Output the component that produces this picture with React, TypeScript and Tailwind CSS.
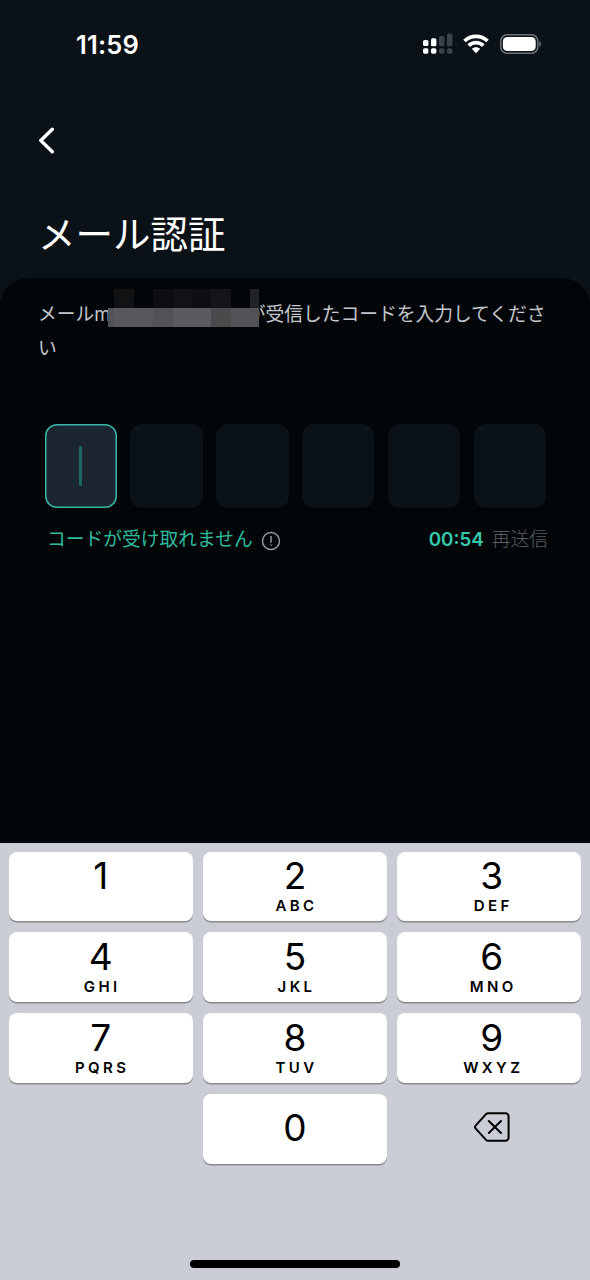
import clsx from 'clsx'

const keys = [
  { digit: '1', letters: '' },
  { digit: '2', letters: 'ABC' },
  { digit: '3', letters: 'DEF' },
  { digit: '4', letters: 'GHI' },
  { digit: '5', letters: 'JKL' },
  { digit: '6', letters: 'MNO' },
  { digit: '7', letters: 'PQRS' },
  { digit: '8', letters: 'TUV' },
  { digit: '9', letters: 'WXYZ' },
]

function StatusBar() {
  return (
    <div className="flex h-[88px] items-center justify-between pl-[76px] pr-[48px]">
      <span className="pt-px text-[25.5px] font-semibold leading-none tracking-[0.2px]">11:59</span>
      <div className="flex items-center">
        <svg width="32" height="22" viewBox="0 0 32 22" className="mr-[9px]">
          <g fill="#fff">
            <rect x="1" y="7" width="5.4" height="6" rx="1.6" />
            <rect x="9" y="5.3" width="5.4" height="8" rx="1.6" />
            <rect x="1" y="15.3" width="5.4" height="5.4" rx="1.6" />
            <rect x="9" y="15.3" width="5.4" height="5.4" rx="1.6" />
          </g>
          <g fill="#3d4148">
            <rect x="17" y="3" width="5.4" height="10.3" rx="1.6" />
            <rect x="25" y="0.6" width="5.4" height="12.7" rx="1.6" />
            <rect x="17" y="15.3" width="5.4" height="5.4" rx="1.6" />
            <rect x="25" y="15.3" width="5.4" height="5.4" rx="1.6" />
          </g>
        </svg>
        <svg width="26" height="20" viewBox="0 0 26 20" fill="none" stroke="#fff" strokeWidth="3.7" className="mr-[11px]">
          <path d="M1.5 7a16.4 16.4 0 0 1 23 0" />
          <path d="M5.7 11.6a10.4 10.4 0 0 1 14.6 0" />
          <path d="M13 13.2c1.7 0 3.1.6 4.2 1.6L13 19.3l-4.2-4.5c1.1-1 2.5-1.6 4.2-1.6Z" fill="#fff" stroke="none" />
        </svg>
        <svg width="42" height="20" viewBox="0 0 42 20">
          <rect x="0.8" y="0.8" width="37" height="18.4" rx="6.2" fill="none" stroke="#6d7176" strokeWidth="1.5" />
          <rect x="2.9" y="2.9" width="32.8" height="14.2" rx="4.4" fill="#fff" />
          <path d="M39.3 7v6c1.1-.5 1.7-1.6 1.7-3s-.6-2.5-1.7-3Z" fill="#6d7176" />
        </svg>
      </div>
    </div>
  )
}

// Pixelated block that hides the address
function MaskedAddress() {
  return (
    <svg width="151" height="38" viewBox="0 0 151 38" shapeRendering="crispEdges" className="absolute left-[70px] top-[-9px]">
      <rect x="6" width="20" height="19" fill="#111214" />
      <rect x="45" width="20" height="19" fill="#0d0e11" />
      <rect x="65" width="19" height="19" fill="#111215" />
      <rect x="84" width="19" height="19" fill="#0e0f12" />
      <rect x="103" width="20" height="19" fill="#141518" />
      <rect x="142" width="9" height="19" fill="#222326" />
      <rect y="19" width="151" height="19" fill="#515256" />
      <rect x="6" y="19" width="39" height="19" fill="#56585b" />
      <rect x="65" y="19" width="38" height="19" fill="#595b5e" />
      <rect x="103" y="19" width="20" height="19" fill="#4a4a4d" />
      <rect x="123" y="19" width="28" height="19" fill="#525356" />
    </svg>
  )
}

function Key({ digit, letters, className }: { digit: string; letters?: string; className?: string }) {
  return (
    <button
      className={clsx(
        'flex h-[69.6px] flex-col items-center rounded-[8px] bg-white text-black shadow-[0_1.5px_0_#888a8e]',
        letters === undefined ? 'justify-center pb-[2px]' : 'pt-[5.3px]',
        className
      )}
    >
      <span className="text-[37px] leading-[38px]">{digit}</span>
      {letters && <span className="mt-[3px] pl-[3px] text-[15px] font-semibold leading-[16px] tracking-[3.4px]">{letters}</span>}
    </button>
  )
}

function Keyboard() {
  return (
    <div className="h-[437px] bg-[#cacdd5] px-[9px] pt-[8.7px]">
      <div className="grid grid-cols-3 gap-x-[9.3px] gap-y-[11.2px]">
        {keys.map((key, index) => (
          <Key key={key.digit} digit={key.digit} letters={key.letters} className={index % 3 === 2 ? 'pl-[6px]' : index % 3 === 0 ? 'pr-[1px]' : ''} />
        ))}
        <div />
        <Key digit="0" />
        <button className="flex items-center justify-center pb-[3px] pl-[7px]">
          <svg width="36" height="30" viewBox="0 0 36 30" fill="none" stroke="#000" strokeWidth="2" strokeLinecap="round" strokeLinejoin="round">
            <path d="M14.2 1.2h17.2a3.2 3.2 0 0 1 3.2 3.2v21.2a3.2 3.2 0 0 1-3.2 3.2H14.2a3 3 0 0 1-2.2-.9L1.8 16.6a2.3 2.3 0 0 1 0-3.2L12 2.1a3 3 0 0 1 2.2-.9Z" />
            <path d="m14.8 9 12.2 12M27 9 14.8 21" />
          </svg>
        </button>
      </div>
      <div className="mx-auto mt-[96.4px] h-[8px] w-[210px] rounded-full bg-black" />
    </div>
  )
}

function App() {
  return (
    <div className="flex h-[1280px] w-[590px] flex-col overflow-hidden bg-[#0a1117] font-['Inter','Noto_Sans_CJK_JP',sans-serif] text-white">
      <StatusBar />
      <header className="h-[190px] px-[38px] pt-[39px]">
        <button className="block">
          <svg width="18" height="28" viewBox="0 0 18 28" fill="none" stroke="#fff" strokeWidth="3.4" strokeLinecap="round" strokeLinejoin="round">
            <path d="M14.3 2.2 2.8 13.5l11.5 11.3" />
          </svg>
        </button>
        <h1 className="mt-[52px] text-[37.5px] font-normal leading-[56px]">メール認証</h1>
      </header>

      <main className="flex-1 rounded-t-[28px] bg-[#030609] px-[38px] pt-[20px]">
        <p className="relative whitespace-nowrap text-[18.75px] leading-[34px] text-[#c3c6cb]">
          メールm
          <span className="inline-block w-[136px]" />
          が受信したコードを入力してくださ
          <br />い
          <MaskedAddress />
        </p>

        <div className="mt-[58px] grid grid-cols-6 gap-[13.4px] pl-[6.5px] pr-[6px]">
          {[0, 1, 2, 3, 4, 5].map((index) => (
            <div
              key={index}
              className={clsx(
                'flex h-[84px] items-center justify-center rounded-[12px]',
                index === 0 ? 'bg-[#1b2630] shadow-[inset_0_0_0_1.5px_#36b5a8]' : 'bg-[#0a1117]'
              )}
            >
              {index === 0 && <span className="h-10 w-[3px] rounded-full bg-[#1f6566]" />}
            </div>
          ))}
        </div>

        <div className="mt-[18px] flex items-center pl-[9px] pr-[4px] text-[18.75px] leading-[28px]">
          <span className="text-[#2fbb9b]">コードが受け取れません</span>
          <svg width="20" height="20" viewBox="0 0 20 20" fill="none" stroke="#96999c" strokeWidth="1.5" strokeLinecap="round" className="relative top-px ml-[8px]">
            <circle cx="10" cy="10" r="8.5" />
            <path d="M10 5.5v5.8" />
            <path d="M10 14v.2" />
          </svg>
          <span className="ml-auto font-semibold text-[#35c9ad]">00:54</span>
          <span className="ml-[8px] font-light text-[#5a5e64]">再送信</span>
        </div>
      </main>

      <Keyboard />
    </div>
  )
}

export default App
